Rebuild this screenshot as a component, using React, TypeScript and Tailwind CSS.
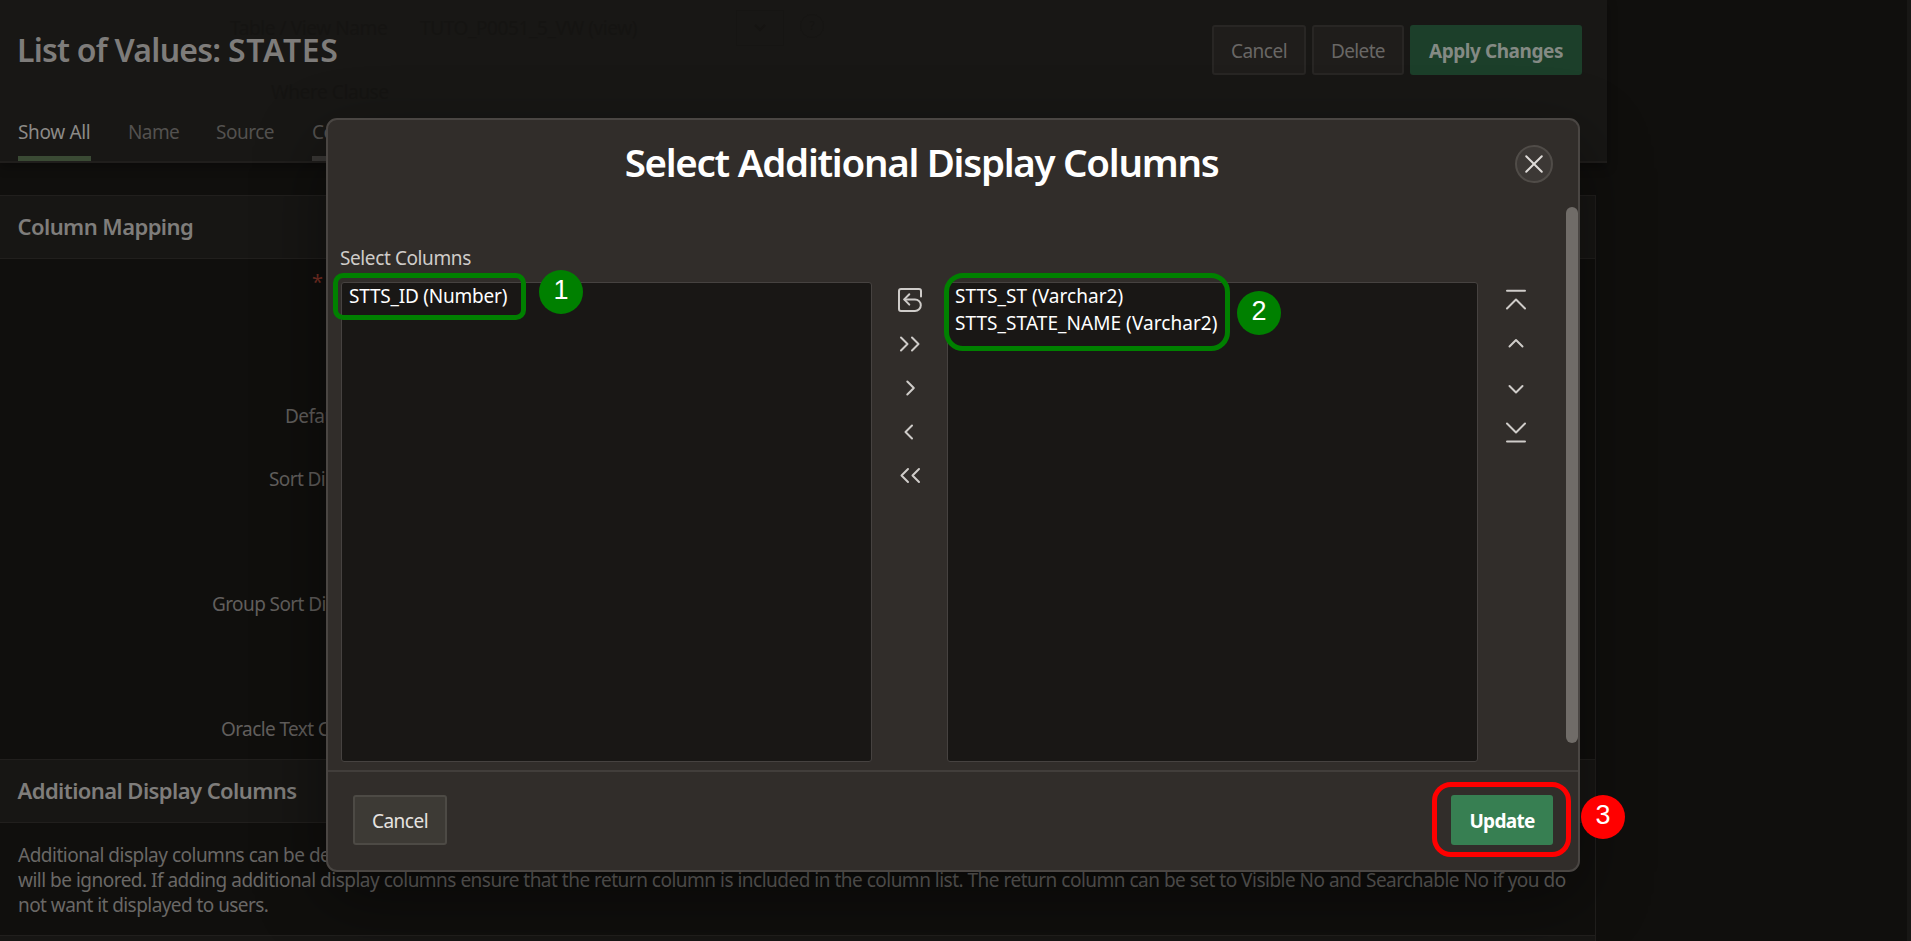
import type { ReactNode } from "react";

const fieldRows = [
  { label: "Return", pad: "pl-[334px]", required: true },
  { label: "Display", pad: "pl-[326px]" },
  { label: "Default Sort", pad: "pl-[285px]" },
  { label: "Sort Direction", pad: "pl-[269px]" },
  { label: "", pad: "pl-0" },
  { label: "Group Sort Direction", pad: "pl-[212px]" },
  { label: "", pad: "pl-0" },
  { label: "Oracle Text Column", pad: "pl-[221px]" },
];

function Icon({ children }: { children: ReactNode }) {
  return (
    <button className="flex h-[44px] w-10 items-center justify-center">
      <svg
        width="26"
        height="26"
        viewBox="0 0 26 26"
        fill="none"
        stroke="#cfccc9"
        strokeWidth="2"
        strokeLinecap="round"
        strokeLinejoin="round"
      >
        {children}
      </svg>
    </button>
  );
}

function Header() {
  return (
    <header className="relative w-[1607px] border-b-2 border-[#201e1c] bg-[#181715] pt-[25px] shadow-[0_4px_10px_rgba(0,0,0,0.3)]">
      <div className="absolute top-[14px] left-[230px] flex items-start text-[19px] leading-7 tracking-[-0.4px] text-[#151412]">
        <span className="w-[190px]">Table / View Name</span>
        <span className="w-[316px]">TUTO_P0051_5_VW (view)</span>
        <span className="-mt-1 flex h-9 w-12 items-center justify-center border border-[#161513]">
          <svg width="12" height="8" viewBox="0 0 12 8" fill="none" stroke="#151412" strokeWidth="2">
            <path d="M1 1l5 5 5-5" />
          </svg>
        </span>
        <span className="ml-4 flex size-6 items-center justify-center rounded-full border border-[#161513] text-xs">
          ?
        </span>
      </div>
      <div className="absolute top-[78px] left-[271px] text-[19px] leading-7 tracking-[-0.4px] text-[#151412]">
        Where Clause
      </div>
      <div className="relative flex h-[50px] items-center justify-between pr-[25px] pl-[17px]">
        <h1 className="text-[32px] leading-10 font-semibold tracking-[-0.75px] text-[#7e7c7a]">
          List of Values: <span className="tracking-[0.7px]">STATES</span>
        </h1>
        <div className="flex h-full gap-1.5 text-[19px] text-[#696765]">
          <button className="w-[94px] rounded-[3px] border-2 border-[#282624] bg-[#1f1d1b] pt-[2px] tracking-[-0.5px]">
            Cancel
          </button>
          <button className="w-[92px] rounded-[3px] border-2 border-[#282624] bg-[#1f1d1b] pt-[2px] tracking-[-0.65px]">
            Delete
          </button>
          <button className="w-[172px] rounded-[3px] bg-[#1c3f2a] pt-[2px] font-bold tracking-[-0.45px] text-[#848a84]">
            Apply Changes
          </button>
        </div>
      </div>
      <nav className="mt-8 flex gap-[37px] pl-[18px] text-[19px] leading-[51px] whitespace-nowrap text-[#53514f]">
        <span className="h-[54px] w-[73px] border-b-[5px] border-[#3a4a34] tracking-[-0.35px] text-[#8c8a87]">
          Show All
        </span>
        <span className="h-[54px] w-[51px] tracking-[-0.6px]">Name</span>
        <span className="h-[54px] w-[59px] tracking-[-0.5px]">Source</span>
        <span className="h-[54px] w-[144px] border-b-[5px] border-[#393735] tracking-[-0.5px]">
          Column Mapping
        </span>
      </nav>
    </header>
  );
}

function Region({ title, children }: { title: string; children: ReactNode }) {
  return (
    <section className="w-[1596px] border-r border-[#211f1d]">
      <h2 className="h-16 border-y border-[#211f1d] bg-[#171614] pl-[17.5px] text-[22px] leading-[61px] font-semibold tracking-[-0.57px] text-[#7f7d7b]">
        {title}
      </h2>
      {children}
    </section>
  );
}

const listBox =
  "h-[480px] w-[531px] rounded-[3px] border border-[#464240] bg-[#191715] pl-[7px] text-[19px] leading-[27px] text-white";

function Modal() {
  return (
    <div className="absolute top-[118px] left-[326px] flex h-[754px] w-[1254px] flex-col rounded-[11px] border-2 border-[#4a4643] bg-[#312d2a] shadow-[0_25px_70px_rgba(0,0,0,0.45)]">
      <div className="flex h-[87px] items-center pt-px pr-[25px]">
        <h2 className="flex-1 pb-[4px] text-center text-[38.5px] leading-[56px] font-semibold tracking-[-1.29px] text-white">
          Select Additional Display Columns
        </h2>
        <button className="mb-px flex size-[38px] items-center justify-center rounded-full border-2 border-[#504c48] bg-[#3c3835]">
          <svg width="20" height="20" viewBox="0 0 20 20" fill="none" stroke="#dedbd8" strokeWidth="2" strokeLinecap="round">
            <path d="M2.2 2.2l15.6 15.6M17.8 2.2L2.2 17.8" />
          </svg>
        </button>
      </div>
      <div className="flex h-[563px] justify-between">
        <div className="pl-[13px]">
          <p className="mt-[38px] -ml-px h-[37px] text-[19px] leading-[27px] tracking-[-0.4px] text-[#cfccc9]">
            Select Columns
          </p>
          <div className="flex">
            <ul className={listBox}>
              <li className="tracking-[-0.22px]">STTS_ID (Number)</li>
            </ul>
            <div className="-mt-1 flex w-[75px] flex-col items-center">
              <Icon>
                <path d="M24 9.5V4a2 2 0 0 0-2-2H4a2 2 0 0 0-2 2v18a2 2 0 0 0 2 2h14a5.8 5.8 0 0 0 0-11.6H7.5" />
                <path d="M12.3 7.2L7.2 12.4l5.1 5.2" />
              </Icon>
              <Icon>
                <path d="M4 6.5l6.5 6.5L4 19.5M15 6.5l6.5 6.5-6.5 6.5" />
              </Icon>
              <Icon>
                <path d="M10.3 6.5l6.5 6.5-6.5 6.5" />
              </Icon>
              <Icon>
                <path d="M15 6.5L8.500 13l6.5 6.5" />
              </Icon>
              <Icon>
                <path d="M11 6L4.500 12.500l6.500 6.500M22 6L15.500 12.500l6.500 6.500" />
              </Icon>
            </div>
            <ul className={listBox}>
              <li className="tracking-[0.04px]">STTS_ST (Varchar2)</li>
              <li className="tracking-[0.06px]">STTS_STATE_NAME (Varchar2)</li>
            </ul>
            <div className="-mt-1 flex w-[75px] flex-col items-center">
              <Icon>
                <path d="M4 3.7h18M4 21.500l9-9 9 9" />
              </Icon>
              <Icon>
                <path d="M6.500 15.500l6.500-6.500 6.500 6.500" />
              </Icon>
              <Icon>
                <path d="M6.500 11l6.500 6.500 6.500-6.500" />
              </Icon>
              <Icon>
                <path d="M4 4.500l9 9 9-9M4 22.500h18" />
              </Icon>
            </div>
          </div>
        </div>
        <div className="h-[536px] w-3 rounded-full bg-[#706c68]" />
      </div>
      <div className="flex flex-1 items-start justify-between border-t-2 border-[#423e3b] px-[25px] pt-[23px] text-[19px]">
        <button className="h-[50px] w-[94px] rounded-[3px] border-2 border-[#4d4a45] bg-[#3d3a35] pt-[2px] tracking-[-0.5px] text-[#e6e3e0]">
          Cancel
        </button>
        <button className="h-[50px] w-[102px] rounded-[3px] bg-[#377f52] pt-[2px] font-bold tracking-[-0.7px] text-white">
          Update
        </button>
      </div>
    </div>
  );
}

const badge =
  "absolute flex size-11 items-center justify-center rounded-full pb-[3px] font-['Liberation_Sans',Arial,sans-serif] text-[27px] leading-none text-white";

export default function App() {
  return (
    <div className="relative h-[941px] w-[1911px] overflow-hidden border-r-4 border-[#181715] bg-[#100f0d] font-['Noto_Sans','Open_Sans',sans-serif]">
      <Header />
      <main className="pt-8">
        <Region title="Column Mapping">
          <div className="h-[500px] pt-px text-[19px] tracking-[-0.6px] text-[#625f5d]">
            {fieldRows.map((row, i) => (
              <div key={i} className={`relative flex h-[62.5px] items-center ${row.pad}`}>
                {row.required && (
                  <span className="absolute top-[8px] left-[312px] text-[20px] leading-7 text-[#7a2f24]">*</span>
                )}
                {row.label}
              </div>
            ))}
          </div>
        </Region>
        <Region title="Additional Display Columns">
          <p className="h-[112px] pt-5 pl-[18px] text-[19px] leading-[25px] tracking-[-0.505px] whitespace-nowrap text-[#6a6866]">
            Additional display columns can be defined for item types that support multiple display columns. For all other item types, additional display columns
            <br />
            will be ignored. If adding additional display columns ensure that the return column is included in the column list. The return column can be set to Visible No and Searchable No if you do
            <br />
            <span className="tracking-[-0.56px]">not want it displayed to users.</span>
          </p>
        </Region>
        <div className="h-8 w-[1596px] border-t border-r border-[#211f1d] bg-[#171614]" />
      </main>

      <Modal />

      <div className="absolute top-[273px] left-[333px] h-[47px] w-[193px] rounded-[10px] border-[5px] border-[#008000]" />
      <div className={`${badge} top-[270px] left-[539px] bg-[#008000]`}>1</div>
      <div className="absolute top-[273px] left-[944px] h-[78px] w-[286px] rounded-[19px] border-[5px] border-[#008000]" />
      <div className={`${badge} top-[291px] left-[1237px] bg-[#008000]`}>2</div>
      <div className="absolute top-[782px] left-[1432px] h-[75px] w-[139px] rounded-[19px] border-[5px] border-[#ff0000]" />
      <div className={`${badge} top-[795px] left-[1581px] bg-[#ff0000]`}>3</div>
    </div>
  );
}
